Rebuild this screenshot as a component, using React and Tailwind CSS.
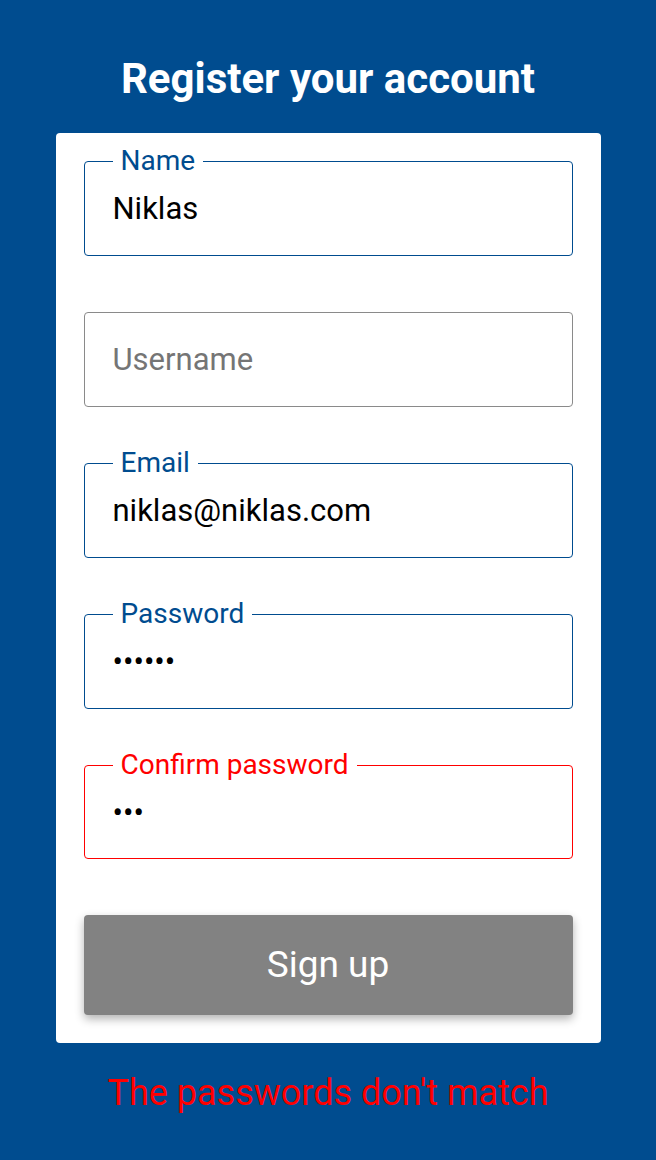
import React from "react";

function Field({ label, value, placeholder, type = "text", error, h = "h-[95px]" }) {
  const border = error ? "border-[#ff0000]" : value ? "border-[#004c8f]" : "border-[#8a8a8a]";
  const labelColor = error ? "text-[#ff0000]" : "text-[#004c8f]";
  return (
    <div className={`relative ${h} rounded-[4px] border ${border}`}>
      {value ? (
        <span className={`absolute left-[28px] top-[-17px] bg-white px-2 text-[28px] leading-[32px] ${labelColor}`}>
          {label}
        </span>
      ) : null}
      <input
        type={type}
        defaultValue={value}
        placeholder={placeholder}
        className="h-full w-full rounded-[4px] bg-transparent pl-[28px] pr-4 text-[31px] text-black outline-none placeholder:text-[#757575]"
      />
    </div>
  );
}

export default function App() {
  return (
    <div
      className="flex min-h-[1160px] flex-col items-center bg-[#004c8f] pt-[55px]"
      style={{ fontFamily: "Roboto, 'Noto Sans', sans-serif" }}
    >
      <h1 className="text-[42px] font-bold leading-[48px] text-white">Register your account</h1>
      <div className="mt-[30px] flex w-[545px] flex-col gap-[56px] rounded-[4px] bg-white px-[28px] pb-[28px] pt-[28px]">
        <Field label="Name" value="Niklas" />
        <Field label="Username" placeholder="Username" />
        <Field label="Email" value="niklas@niklas.com" />
        <Field label="Password" value="123456" type="password" />
        <Field label="Confirm password" value="123" type="password" error h="h-[94px]" />
        <button className="h-[100px] w-full rounded-[4px] bg-[#828282] text-[37px] text-white shadow-[0_4px_10px_rgba(0,0,0,0.3)]">
          Sign up
        </button>
      </div>
      <p className="mt-[30px] text-[36px] leading-[40px] text-[#ff0000]">The passwords don't match</p>
    </div>
  );
}
